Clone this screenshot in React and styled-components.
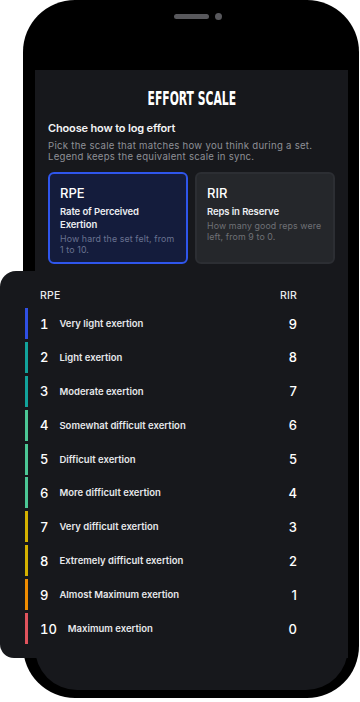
import React from 'react'
import styled, { createGlobalStyle } from 'styled-components'

const GlobalStyle = createGlobalStyle`
  html, body {
    margin: 0;
    padding: 0;
    background: #ffffff;
  }
  body {
    font-family: Inter, "Noto Sans", sans-serif;
    overflow: hidden;
  }
`

const Stage = styled.div`
  position: relative;
  width: 360px;
  height: 702px;
  overflow: hidden;
`

const Phone = styled.div`
  margin-left: 23px;
  width: 336px;
  height: 698px;
  box-sizing: border-box;
  padding: 13px 11px 8px 12px;
  background: #000;
  border-radius: 52px;
  display: flex;
  flex-direction: column;
`

const Notch = styled.div`
  height: 7px;
  display: flex;
  align-items: center;
  justify-content: center;
`

const Speaker = styled.div`
  position: relative;
  width: 35px;
  height: 5px;
  border-radius: 3px;
  background: #58585c;

  &::after {
    content: '';
    position: absolute;
    left: 41px;
    top: -1px;
    width: 7px;
    height: 7px;
    border-radius: 50%;
    background: #58585c;
  }
`

const Screen = styled.div`
  flex: 1;
  margin-top: 50px;
  background: #17181c;
  border-radius: 0 0 42px 42px;
  padding: 16px 13px 0 13px;
  color: #f1f1f3;
`

const Title = styled.h1`
  margin: 0;
  text-align: center;
  font-family: "Liberation Sans Narrow", "DejaVu Sans Condensed", sans-serif;
  font-weight: 700;
  font-size: 20px;
  line-height: 24px;
  color: #ffffff;

  span {
    display: inline-block;
    transform: scaleX(0.6);
  }
`

const Heading = styled.h2`
  margin: 10px 0 0;
  font-size: 11px;
  line-height: 16px;
  font-weight: 600;
  letter-spacing: -0.15px;
  color: #f3f3f5;
`

const Lead = styled.p`
  margin: 4px 0 0;
  font-size: 9.6px;
  line-height: 11px;
  letter-spacing: 0.27px;
  color: #8e9096;
`

const Options = styled.div`
  margin-top: 10px;
  display: grid;
  grid-template-columns: 1fr 1fr;
  gap: 7px;
`

const Option = styled.div`
  height: 92px;
  box-sizing: border-box;
  padding: 11px 8px 0 10px;
  border-radius: 6px;
  border: 2px solid ${p => (p.active ? '#2f56ec' : '#2c2e33')};
  background: ${p => (p.active ? '#141c3c' : '#25272b')};
`

const OptionName = styled.div`
  font-size: 13px;
  line-height: 17px;
  font-weight: 500;
  color: #ffffff;
`

const OptionLong = styled.div`
  margin-top: 3px;
  font-size: 9.5px;
  line-height: 13px;
  font-weight: 600;
  letter-spacing: -0.1px;
  color: #eceef2;
`

const OptionNote = styled.div`
  margin-top: 3px;
  font-size: 8.8px;
  line-height: 10.7px;
  letter-spacing: 0.12px;
  color: ${p => (p.active ? '#697290' : '#6f7176')};
`

const Legend = styled.div`
  position: absolute;
  left: 0;
  top: 271px;
  width: 348px;
  box-sizing: border-box;
  padding: 18px 51px 14px 25px;
  background: #17181c;
  border-radius: 16px 0 0 14px;
  color: #f1f1f3;
`

const LegendHead = styled.div`
  display: flex;
  justify-content: space-between;
  padding-left: 15px;
  height: 14px;
  line-height: 14px;
  font-size: 10.5px;
  font-weight: 500;
  letter-spacing: 0.2px;
  color: #e8e9ec;
`

const Rows = styled.div`
  margin-top: 5px;
  display: flex;
  flex-direction: column;
  gap: 2.9px;
`

const Row = styled.div`
  height: 31px;
  display: flex;
  align-items: center;
  padding-left: 12px;
  border-left: 3px solid ${p => p.color};
`

const Num = styled.span`
  font-size: 13px;
  font-weight: 500;
  font-variant-numeric: tabular-nums;
  color: #ffffff;
  margin-right: 11px;
`

const Label = styled.span`
  font-size: 9.5px;
  font-weight: 600;
  letter-spacing: 0;
  color: #e6e7ea;
`

const Rir = styled.span`
  margin-left: auto;
  font-size: 13px;
  font-weight: 500;
  color: #ffffff;
`

const scale = [
  { rpe: 1, label: 'Very light exertion', rir: 9, color: '#2f4fe3' },
  { rpe: 2, label: 'Light exertion', rir: 8, color: '#12a39b' },
  { rpe: 3, label: 'Moderate exertion', rir: 7, color: '#12a39b' },
  { rpe: 4, label: 'Somewhat difficult exertion', rir: 6, color: '#4cc795' },
  { rpe: 5, label: 'Difficult exertion', rir: 5, color: '#4cc795' },
  { rpe: 6, label: 'More difficult exertion', rir: 4, color: '#4cc795' },
  { rpe: 7, label: 'Very difficult exertion', rir: 3, color: '#d5b100' },
  { rpe: 8, label: 'Extremely difficult exertion', rir: 2, color: '#d5b100' },
  { rpe: 9, label: 'Almost Maximum exertion', rir: 1, color: '#f08c00' },
  { rpe: 10, label: 'Maximum exertion', rir: 0, color: '#e0535d' }
]

export default function App() {
  return (
    <Stage>
      <GlobalStyle />
      <Phone>
        <Notch>
          <Speaker />
        </Notch>
        <Screen>
          <Title>
            <span>EFFORT SCALE</span>
          </Title>
          <Heading>Choose how to log effort</Heading>
          <Lead>
            Pick the scale that matches how you think during a set.
            <br />
            Legend keeps the equivalent scale in sync.
          </Lead>
          <Options>
            <Option active>
              <OptionName>RPE</OptionName>
              <OptionLong>Rate of Perceived Exertion</OptionLong>
              <OptionNote active>How hard the set felt, from 1 to 10.</OptionNote>
            </Option>
            <Option>
              <OptionName>RIR</OptionName>
              <OptionLong>Reps in Reserve</OptionLong>
              <OptionNote>How many good reps were left, from 9 to 0.</OptionNote>
            </Option>
          </Options>
        </Screen>
      </Phone>
      <Legend>
        <LegendHead>
          <span>RPE</span>
          <span>RIR</span>
        </LegendHead>
        <Rows>
          {scale.map(s => (
            <Row key={s.rpe} color={s.color}>
              <Num>{s.rpe}</Num>
              <Label>{s.label}</Label>
              <Rir>{s.rir}</Rir>
            </Row>
          ))}
        </Rows>
      </Legend>
    </Stage>
  )
}
